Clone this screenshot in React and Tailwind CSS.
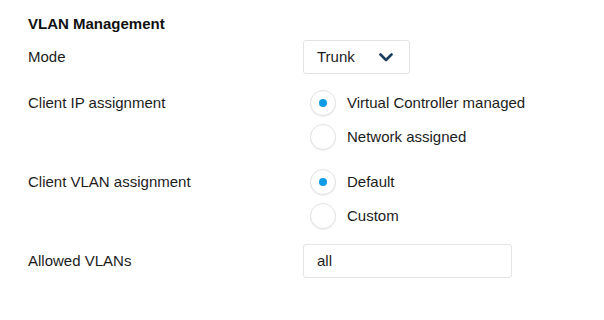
import React from "react";

function Radio({ checked, label }) {
  return (
    <div className="flex h-[34px] items-center">
      <div className="ml-[7px] flex h-[26px] w-[26px] items-center justify-center rounded-full border-[1.5px] border-[#e2e2e2] bg-white shadow-[0_1px_1px_rgba(0,0,0,0.06)]">
        {checked && <div className="h-[8px] w-[8px] rounded-full bg-[#0f9be6]" />}
      </div>
      <span className="ml-[11px] text-[15px] text-[#1c1c1c]">{label}</span>
    </div>
  );
}

export default function App() {
  return (
    <div className="h-[320px] w-[604px] bg-white pl-[28px] pt-[14px] font-['Liberation_Sans',Arial,sans-serif] text-[#1c1c1c]">
      <div className="h-[20px] text-[15px] font-bold leading-[20px] text-[#111]">VLAN Management</div>

      <div className="mt-[6px] grid grid-cols-[275px_1fr]">
        <div className="flex h-[34px] items-center text-[15px]">Mode</div>
        <div>
          <div className="flex h-[34px] w-[107px] items-center justify-between rounded-[3px] border border-[#e3e3e3] bg-white pl-[13px] pr-[16px] text-[15px]">
            <span>Trunk</span>
            <svg width="14" height="9" viewBox="0 0 14 9" fill="none">
              <path d="M1.5 1.5 L7 7 L12.5 1.5" stroke="#1d3d5e" strokeWidth="2.6" strokeLinecap="round" strokeLinejoin="round" />
            </svg>
          </div>
        </div>
      </div>

      <div className="mt-[12px] grid grid-cols-[275px_1fr]">
        <div className="flex h-[34px] items-center text-[15px]">Client IP assignment</div>
        <div>
          <Radio checked label="Virtual Controller managed" />
          <Radio label="Network assigned" />
        </div>
      </div>

      <div className="mt-[11px] grid grid-cols-[275px_1fr]">
        <div className="flex h-[34px] items-center text-[15px]">Client VLAN assignment</div>
        <div>
          <Radio checked label="Default" />
          <Radio label="Custom" />
        </div>
      </div>

      <div className="mt-[11px] grid grid-cols-[275px_1fr]">
        <div className="flex h-[34px] items-center text-[15px]">Allowed VLANs</div>
        <div>
          <div className="flex h-[34px] w-[209px] items-center rounded-[3px] border border-[#e3e3e3] bg-white pl-[13px] text-[15px]">
            all
          </div>
        </div>
      </div>
    </div>
  );
}
